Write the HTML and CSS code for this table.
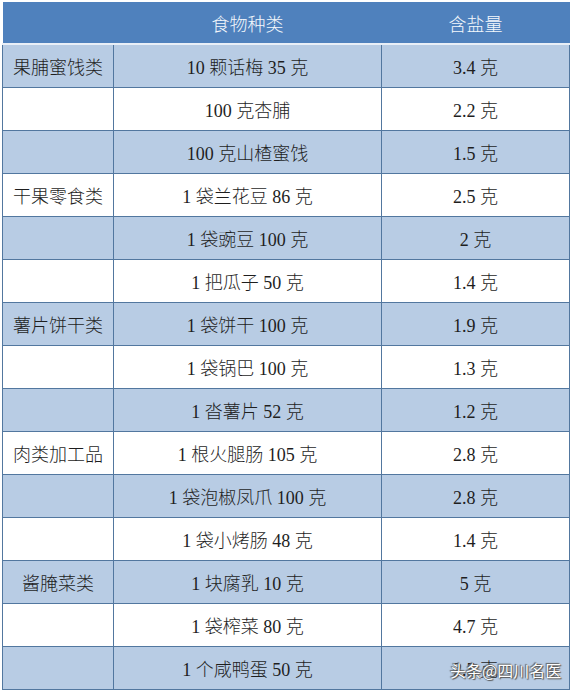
FILE: index.html
```html
<!DOCTYPE html>
<html lang="zh">
<head>
<meta charset="utf-8">
<title>零食含盐量</title>
<link rel="stylesheet" href="styles.css">
</head>
<body>
<div class="wrap">
<table class="salt">
  <colgroup>
    <col class="c1"><col class="c2"><col class="c3">
  </colgroup>
  <thead>
    <tr><th></th><th>食物种类</th><th>含盐量</th></tr>
  </thead>
  <tbody>
    <tr class="alt"><td>果脯蜜饯类</td><td>10 颗话梅 35 克</td><td>3.4 克</td></tr>
    <tr><td></td><td>100 克杏脯</td><td>2.2 克</td></tr>
    <tr class="alt"><td></td><td>100 克山楂蜜饯</td><td>1.5 克</td></tr>
    <tr><td>干果零食类</td><td>1 袋兰花豆 86 克</td><td>2.5 克</td></tr>
    <tr class="alt"><td></td><td>1 袋豌豆 100 克</td><td>2 克</td></tr>
    <tr><td></td><td>1 把瓜子 50 克</td><td>1.4 克</td></tr>
    <tr class="alt"><td>薯片饼干类</td><td>1 袋饼干 100 克</td><td>1.9 克</td></tr>
    <tr><td></td><td>1 袋锅巴 100 克</td><td>1.3 克</td></tr>
    <tr class="alt"><td></td><td>1 沓薯片 52 克</td><td>1.2 克</td></tr>
    <tr><td>肉类加工品</td><td>1 根火腿肠 105 克</td><td>2.8 克</td></tr>
    <tr class="alt"><td></td><td>1 袋泡椒凤爪 100 克</td><td>2.8 克</td></tr>
    <tr><td></td><td>1 袋小烤肠 48 克</td><td>1.4 克</td></tr>
    <tr class="alt"><td>酱腌菜类</td><td>1 块腐乳 10 克</td><td>5 克</td></tr>
    <tr><td></td><td>1 袋榨菜 80 克</td><td>4.7 克</td></tr>
    <tr class="alt"><td></td><td>1 个咸鸭蛋 50 克</td><td>2.5 克</td></tr>
  </tbody>
</table>
<div class="watermark">头条@四川名医</div>
</div>
</body>
</html>
```

FILE: styles.css
```css
html, body {
  margin: 0;
  padding: 0;
  background: #ffffff;
}
.wrap {
  position: relative;
  width: 573px;
  height: 691px;
  padding: 2px 0 0 2px;
  box-sizing: border-box;
}
.salt {
  border-collapse: collapse;
  width: 567px;
  table-layout: fixed;
  font-family: "Liberation Serif", "Noto Sans CJK SC", serif;
  font-size: 18px;
  font-weight: 300;
  color: #1e1e1e;
}
.c1 { width: 111px; }
.c2 { width: 268px; }
.c3 { width: 188px; }
.salt th {
  height: 41px;
  padding: 0;
  background: #4f81bd;
  color: #f4f8fc;
  font-weight: 300;
  text-align: center;
  border-bottom: 2px solid #e9eff7;
}
.salt td {
  height: 42px;
  padding: 0;
  text-align: center;
  border: 1px solid #52779f;
  background: #ffffff;
}
.salt tr.alt td {
  background: #b8cce4;
}
.watermark {
  position: absolute;
  left: 450px;
  top: 659px;
  font-family: "Noto Sans CJK SC", sans-serif;
  font-size: 16px;
  line-height: 22px;
  color: #ffffff;
  text-shadow: 0 0 1px #444, 1px 1px 1px #555, -1px -1px 1px #666;
}
```
